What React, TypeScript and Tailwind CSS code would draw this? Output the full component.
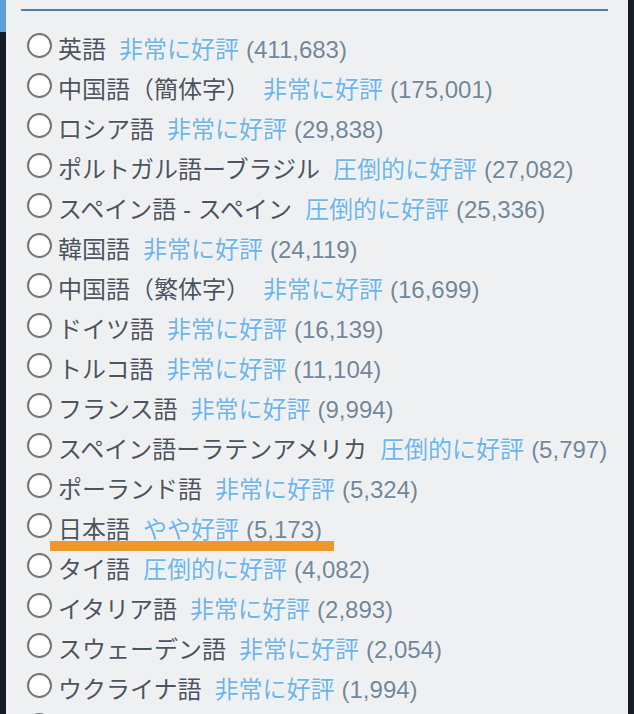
type Lang = {
  name: string;
  rating: string;
  count: string;
  mark?: boolean;
};

const langs: Lang[] = [
  { name: "英語", rating: "非常に好評", count: "(411,683)" },
  { name: "中国語（簡体字）", rating: "非常に好評", count: "(175,001)" },
  { name: "ロシア語", rating: "非常に好評", count: "(29,838)" },
  { name: "ポルトガル語ーブラジル", rating: "圧倒的に好評", count: "(27,082)" },
  { name: "スペイン語 - スペイン", rating: "圧倒的に好評", count: "(25,336)" },
  { name: "韓国語", rating: "非常に好評", count: "(24,119)" },
  { name: "中国語（繁体字）", rating: "非常に好評", count: "(16,699)" },
  { name: "ドイツ語", rating: "非常に好評", count: "(16,139)" },
  { name: "トルコ語", rating: "非常に好評", count: "(11,104)" },
  { name: "フランス語", rating: "非常に好評", count: "(9,994)" },
  { name: "スペイン語ーラテンアメリカ", rating: "圧倒的に好評", count: "(5,797)" },
  { name: "ポーランド語", rating: "非常に好評", count: "(5,324)" },
  { name: "日本語", rating: "やや好評", count: "(5,173)", mark: true },
  { name: "タイ語", rating: "圧倒的に好評", count: "(4,082)" },
  { name: "イタリア語", rating: "非常に好評", count: "(2,893)" },
  { name: "スウェーデン語", rating: "非常に好評", count: "(2,054)" },
  { name: "ウクライナ語", rating: "非常に好評", count: "(1,994)" },
];

export default function App() {
  return (
    <div className="flex h-[714px] w-[634px] overflow-hidden bg-[#171d27] font-['Liberation_Sans','Noto_Sans_CJK_JP',sans-serif]">
      <div className="flex w-[6px] shrink-0 flex-col">
        <div className="h-[32px] bg-[#5d9fd6]" />
        <div className="flex-1 bg-[#171d27]" />
      </div>

      <div className="flex-1 overflow-hidden bg-[#eff0f2] pl-[15px] pr-[20px]">
        <div className="mt-[9px] h-[2px] bg-[#4f7fa6]" />

        <ul className="mt-[19px] pl-[6px]">
          {langs.map((lang) => (
            <li
              key={lang.name}
              className="relative flex h-[40px] items-center whitespace-nowrap text-[24px] leading-[40px] [text-shadow:0_0_2px_#ffffff]"
            >
              <span className="mr-[6px] -mt-[10px] h-[25px] w-[25px] shrink-0 rounded-full border-2 border-[#747474] bg-white" />
              <span className="text-[#4b545e]">{lang.name}</span>
              <span className="ml-[13px] text-[#6db4ec]">{lang.rating}</span>
              <span className="ml-[7px] text-[#6f8799]">{lang.count}</span>
              {lang.mark && (
                <span className="absolute left-[23px] top-[31px] h-[10px] w-[284px] bg-[#f0952f]" />
              )}
            </li>
          ))}
          {/* next row, cut off at the bottom edge */}
          <li className="flex h-[40px] items-center">
            <span className="-mt-[10px] h-[25px] w-[25px] shrink-0 rounded-full border-2 border-[#747474] bg-white" />
          </li>
        </ul>
      </div>

      <div className="w-[6px] shrink-0 bg-[#171d27]" />
    </div>
  );
}
